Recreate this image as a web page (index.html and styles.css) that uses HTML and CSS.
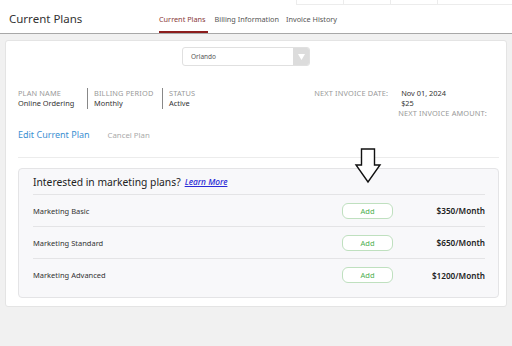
FILE: index.html
```html
<!DOCTYPE html>
<html lang="en">
<head>
    <meta charset="UTF-8">
    <title>Current Plans</title>
    <link rel="stylesheet" href="styles.css">
</head>
<body>
    <div class="header">
        <div class="top-strip">
            <div class="strip-cell"></div>
            <div class="strip-cell"></div>
            <div class="strip-cell"></div>
            <div class="strip-cell wide"></div>
        </div>
        <div class="header-row">
            <h1 class="page-title">Current Plans</h1>
            <nav class="tabs">
                <a class="tab active">Current Plans</a>
                <a class="tab">Billing Information</a>
                <a class="tab">Invoice History</a>
            </nav>
        </div>
    </div>

    <div class="main">
        <div class="card">
            <div class="location-row">
                <div class="select">
                    <span class="select-text">Orlando</span>
                    <span class="select-btn">
                        <svg width="7" height="6" viewBox="0 0 7 6"><polygon points="0,0 7,0 3.5,6" fill="#fff"/></svg>
                    </span>
                </div>
            </div>

            <div class="plan-info">
                <div class="plan-cols">
                    <div class="plan-col">
                        <div class="info-label">PLAN NAME</div>
                        <div class="info-value">Online Ordering</div>
                    </div>
                    <div class="plan-col">
                        <div class="info-label">BILLING PERIOD</div>
                        <div class="info-value">Monthly</div>
                    </div>
                    <div class="plan-col">
                        <div class="info-label">STATUS</div>
                        <div class="info-value">Active</div>
                    </div>
                </div>
                <div class="invoice">
                    <div class="info-label">NEXT INVOICE DATE:</div>
                    <div class="info-value">Nov 01, 2024</div>
                    <div></div>
                    <div class="info-value">$25</div>
                    <div></div>
                    <div class="info-label amount-label">NEXT INVOICE AMOUNT:</div>
                </div>
            </div>

            <div class="plan-actions">
                <a class="edit-link">Edit Current Plan</a>
                <a class="cancel-link">Cancel Plan</a>
            </div>

            <div class="divider"></div>

            <div class="marketing">
                <div class="marketing-head">
                    Interested in marketing plans? <a class="learn-more">Learn More</a>
                </div>
                <div class="mk-row">
                    <span class="mk-name">Marketing Basic</span>
                    <button class="add-btn">Add</button>
                    <span class="mk-price">$350/Month</span>
                </div>
                <div class="mk-row">
                    <span class="mk-name">Marketing Standard</span>
                    <button class="add-btn">Add</button>
                    <span class="mk-price">$650/Month</span>
                </div>
                <div class="mk-row">
                    <span class="mk-name">Marketing Advanced</span>
                    <button class="add-btn">Add</button>
                    <span class="mk-price">$1200/Month</span>
                </div>
            </div>

            <svg class="pointer-arrow" width="28" height="36" viewBox="0 0 28 36">
                <polygon points="7.5,1 20.5,1 20.5,17 26,17 14,34 2,17 7.5,17" fill="#fff" stroke="#111" stroke-width="1.4" stroke-linejoin="miter"/>
            </svg>
        </div>
    </div>
</body>
</html>
```

FILE: styles.css
```css
* {
    margin: 0;
    padding: 0;
    box-sizing: border-box;
}

body {
    font-family: 'Noto Sans', 'Open Sans', sans-serif;
    background-color: #f1f1f1;
    color: #333;
}

.header {
    background-color: white;
    border-bottom: 1px solid #a8a8a8;
}

.top-strip {
    display: flex;
    justify-content: flex-end;
    height: 5px;
}

.strip-cell {
    width: 47px;
    border-left: 1px solid #ececec;
    border-bottom: 1px solid #ececec;
}

.strip-cell.wide {
    width: 75px;
}

.header-row {
    display: flex;
    align-items: stretch;
    height: 28px;
}

.page-title {
    font-size: 11.5px;
    font-weight: 400;
    color: #333;
    width: 159px;
    padding-left: 9px;
    padding-top: 6px;
}

.tabs {
    display: flex;
    gap: 7px;
}

.tab {
    font-size: 7.3px;
    color: #555;
    padding-top: 9px;
    border-bottom: 2px solid transparent;
}

.tab.active {
    color: #8a3a3a;
    border-bottom-color: #8b1c1c;
    padding-right: 2px;
}

.main {
    padding: 6px 5px;
}

.card {
    position: relative;
    background-color: white;
    border: 1px solid #e4e4e4;
    border-radius: 3px;
    padding: 6px 7px 8px 12px;
}

.location-row {
    display: flex;
    padding-left: 164px;
}

.select {
    display: flex;
    width: 128px;
    height: 19px;
    border: 1px solid #e0e0e0;
    border-radius: 3px;
    overflow: hidden;
}

.select-text {
    flex: 1;
    font-size: 6.5px;
    color: #555;
    padding-left: 8px;
    line-height: 17px;
}

.select-btn {
    width: 16px;
    background-color: #dcdcdc;
    display: flex;
    align-items: center;
    justify-content: center;
}

.plan-info {
    display: flex;
    justify-content: space-between;
    margin-top: 22px;
    padding-right: 12px;
}

.plan-cols {
    display: flex;
}

.plan-col {
    padding: 0 6px;
    border-left: 1px solid #888;
    height: 21px;
}

.plan-col:first-child {
    border-left: none;
    padding-left: 0;
    width: 69px;
}

.plan-col:nth-child(2) {
    width: 75px;
}

.info-label {
    font-size: 7.4px;
    color: #999;
    line-height: 10px;
    letter-spacing: 0.15px;
}

.info-value {
    font-size: 7.4px;
    color: #333;
    line-height: 10px;
}

.invoice {
    display: grid;
    grid-template-columns: auto auto;
    column-gap: 13px;
}

.amount-label {
    margin-left: -3px;
}

.plan-actions {
    display: flex;
    align-items: baseline;
    gap: 18px;
    margin-top: 10px;
}

.edit-link {
    font-size: 9px;
    color: #3b8fd2;
}

.cancel-link {
    font-size: 7.8px;
    color: #aaa;
}

.divider {
    height: 1px;
    background-color: #ececec;
    margin-top: 16px;
}

.marketing {
    margin-top: 10px;
    background-color: #f8f8fa;
    border: 1px solid #e4e4e6;
    border-radius: 4px;
    padding: 0 13px 6px 14px;
}

.marketing-head {
    height: 26px;
    display: flex;
    align-items: center;
    gap: 4px;
    font-size: 10.3px;
    color: #222;
    border-bottom: 1px solid #e4e4e6;
}

.learn-more {
    font-size: 8.3px;
    font-style: italic;
    font-weight: 500;
    color: #2a2ad6;
    text-decoration: underline;
}

.mk-row {
    display: flex;
    align-items: center;
    height: 32px;
    border-bottom: 1px solid #e4e4e6;
}

.mk-row:last-child {
    border-bottom: none;
}

.mk-name {
    flex: 1;
    font-size: 7.5px;
    color: #333;
}

.add-btn {
    width: 51px;
    height: 16px;
    border: 1px solid #bfe0bf;
    border-radius: 6px;
    background-color: white;
    color: #4caf50;
    font-family: inherit;
    font-size: 7.5px;
}

.mk-price {
    width: 92px;
    text-align: right;
    font-size: 8.2px;
    font-weight: 600;
    color: #222;
}

.pointer-arrow {
    position: absolute;
    left: 348px;
    top: 107px;
}
```
